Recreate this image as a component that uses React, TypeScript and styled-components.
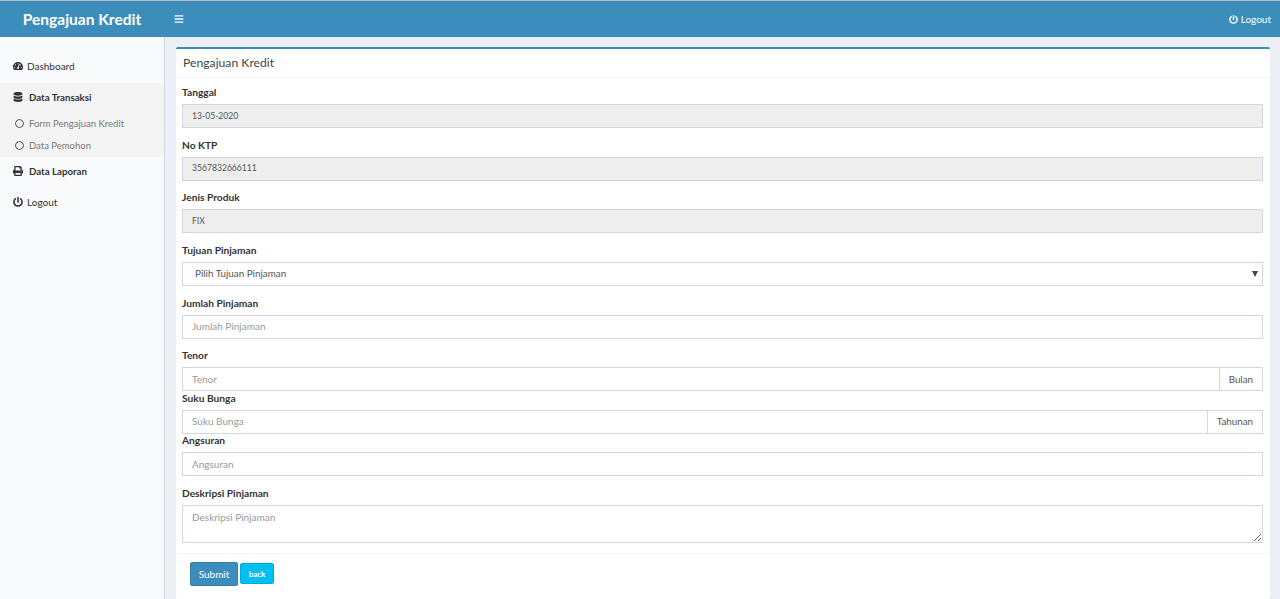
import styled, { createGlobalStyle } from "styled-components"
import { FaBars, FaPowerOff, FaTachometerAlt, FaDatabase, FaRegCircle, FaPrint } from "react-icons/fa"

const Global = createGlobalStyle`
    html, body { margin: 0; padding: 0; height: 100%; }
    body {
        background: #ecf0f5;
        font-family: Lato, "Noto Sans", sans-serif;
        font-size: 10px;
        color: #333;
        overflow: hidden;
    }
    * { box-sizing: border-box; }
`
const Page = styled.div`
    height: 599px;
    display: flex;
    flex-direction: column;
    border-top: 1px solid #b9bec2;
`
const Header = styled.header`
    height: 36px;
    flex: none;
    background: #3c8dbc;
    color: #fff;
    display: flex;
    align-items: center;
`
const Brand = styled.div`
    width: 164px;
    text-align: center;
    font-size: 15.5px;
    font-weight: 700;
`
const Toggle = styled.div`
    margin-left: 10px;
    font-size: 10px;
    display: flex;
`
const HeaderLogout = styled.div`
    margin-left: auto;
    margin-right: 9px;
    display: flex;
    align-items: center;
    gap: 3px;
`
const Body = styled.div`
    flex: 1;
    display: flex;
    min-height: 0;
`
const Sidebar = styled.aside`
    width: 165px;
    flex: none;
    background: #f9fafc;
    border-right: 1px solid #d2d6de;
    padding-top: 14px;
`
const NavItem = styled.div`
    height: 32px;
    display: flex;
    align-items: center;
    gap: 4px;
    padding: 0 0 2px 13px;
    color: #333;
    svg { font-size: 10px; }
`
const NavItemWide = styled(NavItem)`
    height: 30px;
    gap: 6px;
    font-size: 9.7px;
    font-weight: 700;
`
const NavGroup = styled.div`
    background: #f4f4f5;
`
const SubItem = styled.div`
    height: 22px;
    display: flex;
    align-items: center;
    gap: 5px;
    padding: 0 0 2px 15px;
    color: #777;
    font-size: 9.5px;
    svg { font-size: 9px; color: #444; }
`
const Content = styled.main`
    flex: 1;
    padding: 10px 10px 0 11px;
    min-width: 0;
`
const Box = styled.section`
    background: #fff;
    border-top: 2px solid #3c8dbc;
    border-radius: 2px;
    height: 100%;
`
const BoxHeader = styled.h3`
    margin: 0;
    height: 29px;
    padding: 0 0 2px 7px;
    display: flex;
    align-items: center;
    font-size: 12.2px;
    font-weight: 400;
    color: #444;
    border-bottom: 1px solid #f4f4f4;
`
const Form = styled.form`
    padding: 7px 7px 0 6px;
`
const Group = styled.div<{ $tight?: boolean }>`
    margin-bottom: ${(p) => (p.$tight ? "-0.5px" : "9.67px")};
`
const Label = styled.label`
    display: block;
    height: 14px;
    line-height: 15px;
    margin-bottom: 5px;
    font-size: 10.2px;
    font-weight: 700;
    color: #333;
`
const Input = styled.input`
    display: block;
    width: 100%;
    height: 24px;
    padding: 0 9px 1px;
    border: 1px solid #d2d6de;
    border-radius: 0;
    background: ${(p) => (p.readOnly ? "#eee" : "#fff")};
    color: #555;
    font: inherit;
    font-size: ${(p) => (p.readOnly ? "8.6px" : "10px")};
    outline: none;
    &::placeholder { color: #999; }
`
const InputRow = styled.div`
    display: flex;
    ${Input} { flex: 1; min-width: 0; }
`
const Addon = styled.span`
    flex: none;
    display: flex;
    align-items: center;
    padding: 0 9px 1px;
    border: 1px solid #d2d6de;
    border-left: 0;
    font-size: 9.8px;
    color: #555;
`
const SelectWrap = styled.div`
    position: relative;
    &::after {
        content: "";
        position: absolute;
        right: 5px;
        top: 9px;
        border-left: 3px solid transparent;
        border-right: 3px solid transparent;
        border-top: 6px solid #444;
        pointer-events: none;
    }
`
const Select = styled.select`
    display: block;
    width: 100%;
    height: 24px;
    padding: 0 12px 2px;
    border: 1px solid #d2d6de;
    border-radius: 0;
    appearance: none;
    background: #fff;
    color: #555;
    font: inherit;
    font-size: 9.85px;
    outline: none;
`
const TextArea = styled.textarea`
    display: block;
    width: 100%;
    height: 38px;
    padding: 5px 9px;
    border: 1px solid #d2d6de;
    border-radius: 0;
    font: inherit;
    color: #555;
    outline: none;
    &::placeholder { color: #999; }
`
const Footer = styled.div`
    border-top: 1px solid #f4f4f4;
    padding: 8px 0 0 14px;
    display: flex;
    align-items: center;
    gap: 2px;
`
const Button = styled.button<{ $small?: boolean }>`
    height: ${(p) => (p.$small ? "21px" : "24px")};
    width: ${(p) => (p.$small ? "34px" : "48px")};
    padding: 0;
    border: 1px solid ${(p) => (p.$small ? "#00acd6" : "#367fa9")};
    border-radius: 2px;
    background: ${(p) => (p.$small ? "#00c0ef" : "#3c8dbc")};
    color: #fff;
    font-family: inherit;
    font-size: ${(p) => (p.$small ? "8px" : "10px")};
    font-weight: ${(p) => (p.$small ? 700 : 400)};
`

export default function App() {
    return <Page>
        <Global />
        <Header>
            <Brand>Pengajuan Kredit</Brand>
            <Toggle><FaBars /></Toggle>
            <HeaderLogout><FaPowerOff size={9} /> Logout</HeaderLogout>
        </Header>
        <Body>
            <Sidebar>
                <NavItem><FaTachometerAlt /> Dashboard</NavItem>
                <NavGroup>
                    <NavItemWide><FaDatabase /> Data Transaksi</NavItemWide>
                    <SubItem><FaRegCircle /> Form Pengajuan Kredit</SubItem>
                    <SubItem><FaRegCircle /> Data Pemohon</SubItem>
                </NavGroup>
                <NavItemWide><FaPrint /> Data Laporan</NavItemWide>
                <NavItem><FaPowerOff /> Logout</NavItem>
            </Sidebar>
            <Content>
                <Box>
                    <BoxHeader>Pengajuan Kredit</BoxHeader>
                    <Form>
                        <Group>
                            <Label>Tanggal</Label>
                            <Input readOnly value="13-05-2020" />
                        </Group>
                        <Group>
                            <Label>No KTP</Label>
                            <Input readOnly value="3567832666111" />
                        </Group>
                        <Group>
                            <Label>Jenis Produk</Label>
                            <Input readOnly value="FIX" />
                        </Group>
                        <Group>
                            <Label>Tujuan Pinjaman</Label>
                            <SelectWrap>
                                <Select defaultValue="">
                                    <option value="">Pilih Tujuan Pinjaman</option>
                                </Select>
                            </SelectWrap>
                        </Group>
                        <Group>
                            <Label>Jumlah Pinjaman</Label>
                            <Input placeholder="Jumlah Pinjaman" />
                        </Group>
                        <Group $tight>
                            <Label>Tenor</Label>
                            <InputRow>
                                <Input placeholder="Tenor" />
                                <Addon>Bulan</Addon>
                            </InputRow>
                        </Group>
                        <Group $tight>
                            <Label>Suku Bunga</Label>
                            <InputRow>
                                <Input placeholder="Suku Bunga" />
                                <Addon>Tahunan</Addon>
                            </InputRow>
                        </Group>
                        <Group>
                            <Label>Angsuran</Label>
                            <Input placeholder="Angsuran" />
                        </Group>
                        <Group>
                            <Label>Deskripsi Pinjaman</Label>
                            <TextArea placeholder="Deskripsi Pinjaman" />
                        </Group>
                    </Form>
                    <Footer>
                        <Button>Submit</Button>
                        <Button $small>back</Button>
                    </Footer>
                </Box>
            </Content>
        </Body>
    </Page>
}
